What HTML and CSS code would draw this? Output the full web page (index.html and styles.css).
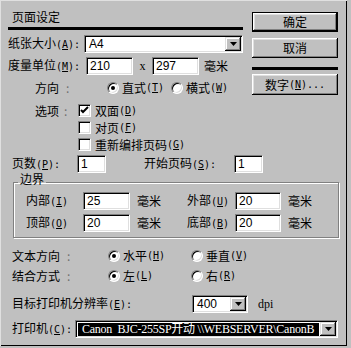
FILE: index.html
```html
<!DOCTYPE html>
<html>
  <head>
    <meta charset="utf-8">
    <title>页面设定</title>
    <link rel="stylesheet" href="styles.css">
  </head>
  <body>
    <div class="dialog">
      <div class="top">
        <div class="main">
          <div class="title">页面设定</div>

          <!-- paper size -->
          <div class="row paper">
            <span class="label w76">纸张大小<span class="acc">(<u>A</u>):</span></span>
            <div class="combo w159">
              <span class="value">A4</span>
              <span class="arrow"><svg width="7" height="4"><path d="M0 0h7l-3.5 4z"/></svg></span>
            </div>
          </div>

          <!-- units -->
          <div class="row measure">
            <span class="label w78">度量单位<span class="acc">(<u>M</u>):</span></span>
            <div class="field w47">210</div>
            <span class="times">x</span>
            <div class="field w47">297</div>
            <span class="unit">毫米</span>
          </div>

          <!-- orientation -->
          <div class="row orient">
            <span class="small-label">方向</span><span class="colon">:</span>
            <span class="choice w64"><span class="radio on"></span>直式<span class="acc">(<u>T</u>)</span></span>
            <span class="choice"><span class="radio"></span>横式<span class="acc">(<u>W</u>)</span></span>
          </div>

          <!-- options -->
          <div class="options">
            <div class="opt-label"><span class="small-label">选项</span><span class="colon">:</span></div>
            <div class="checks">
              <div class="check">
                <span class="box"><svg width="9" height="9"><path d="M1 4l2 2 5-5" fill="none" stroke="#000" stroke-width="2"/></svg></span>双面<span class="acc">(<u>D</u>)</span>
              </div>
              <div class="check"><span class="box"></span>对页<span class="acc">(<u>F</u>)</span></div>
              <div class="check"><span class="box"></span>重新编排页码<span class="acc">(<u>G</u>)</span></div>
            </div>
          </div>
        </div>

        <div class="side">
          <div class="btn default">确定</div>
          <div class="btn cancel">取消</div>
          <div class="sep"></div>
          <div class="btn digits">数字<span class="acc">(<u>N</u>)...</span></div>
        </div>
      </div>

      <!-- page numbers -->
      <div class="row pages">
        <span class="label w65">页数<span class="acc">(<u>P</u>):</span></span>
        <div class="field w29">1</div>
        <span class="label start">开始页码<span class="acc">(<u>S</u>):</span></span>
        <div class="field w29">1</div>
      </div>

      <!-- margins -->
      <fieldset class="margins">
        <legend>边界</legend>
        <div class="row">
          <span class="label w57">内部<span class="acc">(<u>I</u>)</span></span>
          <div class="field w47">25</div>
          <span class="unit wide">毫米</span>
          <span class="label w48">外部<span class="acc">(<u>U</u>)</span></span>
          <div class="field w46">20</div>
          <span class="unit wide">毫米</span>
        </div>
        <div class="row second">
          <span class="label w57">顶部<span class="acc">(<u>O</u>)</span></span>
          <div class="field w47">20</div>
          <span class="unit wide">毫米</span>
          <span class="label w48">底部<span class="acc">(<u>B</u>)</span></span>
          <div class="field w46">20</div>
          <span class="unit wide">毫米</span>
        </div>
      </fieldset>

      <!-- text direction / binding -->
      <div class="row radios textdir">
        <span class="wide-label">文本方向</span><span class="colon">:</span>
        <span class="choice w83"><span class="radio on"></span>水平<span class="acc">(<u>H</u>)</span></span>
        <span class="choice"><span class="radio"></span>垂直<span class="acc">(<u>V</u>)</span></span>
      </div>
      <div class="row radios binding">
        <span class="wide-label">结合方式</span><span class="colon">:</span>
        <span class="choice w83"><span class="radio on"></span>左<span class="acc">(<u>L</u>)</span></span>
        <span class="choice"><span class="radio"></span>右<span class="acc">(<u>R</u>)</span></span>
      </div>

      <!-- printer -->
      <div class="row dpi-row">
        <span class="label w180">目标打印机分辨率<span class="acc">(<u>E</u>):</span></span>
        <div class="combo w56">
          <span class="value">400</span>
          <span class="arrow"><svg width="7" height="4"><path d="M0 0h7l-3.5 4z"/></svg></span>
        </div>
        <span class="dpi">dpi</span>
      </div>
      <div class="row printer">
        <span class="label w63">打印机<span class="acc">(<u>C</u>):</span></span>
        <div class="combo w263">
          <span class="selected">Canon&nbsp; BJC-255SP开动 \\WEBSERVER\CanonB</span>
          <span class="arrow"><svg width="7" height="4"><path d="M0 0h7l-3.5 4z"/></svg></span>
        </div>
      </div>
    </div>
  </body>
</html>
```

FILE: styles.css
```css
* {
  box-sizing: border-box;
}
body {
  margin: 0;
  background-color: #c0c0c0;
  color: #000000;
  font-family: "Noto Sans CJK SC", sans-serif;
  font-size: 12px;
  line-height: 12px;
}
.dialog {
  width: 347px;
  height: 346px;
  box-shadow: inset 1px 1px #e0e0e0, inset -1px -1px #000000;
}
.acc {
  font-family: "DejaVu Sans Mono", monospace;
  font-size: 10px;
}
.acc u {
  text-underline-offset: 1px;
}

/* top part */
.top {
  display: flex;
  padding-left: 8px;
}
.main {
  width: 236px;
}
.side {
  width: 86px;
  margin-left: 8px;
  padding-top: 12px;
}
.title {
  width: 235px;
  height: 30px;
  padding: 11px 0 0 4px;
  border-bottom: 3px solid #000000;
}
.row {
  display: flex;
  align-items: center;
  height: 18px;
  white-space: nowrap;
}
.label {
  flex: none;
}
.w76 { width: 76px; }
.w78 { width: 78px; }
.w65 { width: 65px; }
.w57 { width: 57px; }
.w48 { width: 48px; }
.w63 { width: 63px; }
.w180 { width: 180px; }
.w159 { width: 159px; }
.w47 { width: 47px; }
.w46 { width: 46px; }
.w29 { width: 29px; }
.w56 { width: 56px; }
.w263 { width: 263px; }
.w64 { width: 64px; }
.w83 { width: 83px; }

.paper {
  margin-top: 5px;
}
.measure {
  margin-top: 4px;
}
.times {
  width: 19px;
  text-align: center;
  font-family: "Liberation Serif", serif;
  font-size: 12px;
}
.unit {
  margin-left: 5px;
}
.unit.wide {
  margin-left: 7px;
  width: 50px;
}
.orient {
  margin-top: 7px;
  height: 12px;
  padding-left: 27px;
}
.small-label {
  width: 30px;
}
.colon {
  width: 16px;
  padding-left: 1px;
  color: #707070;
}
.choice {
  display: flex;
  align-items: center;
  flex: none;
}
.radio {
  position: relative;
  width: 12px;
  height: 12px;
  margin-right: 3px;
  border-radius: 50%;
  border: 1px solid;
  border-color: #808080 #ffffff #ffffff #808080;
  background-color: #ffffff;
  box-shadow: inset 1px 1px #000000, inset -1px -1px #dfdfdf;
}
.radio.on::after {
  content: "";
  position: absolute;
  left: 3px;
  top: 3px;
  width: 4px;
  height: 4px;
  border-radius: 50%;
  background-color: #000000;
}
.options {
  display: flex;
  margin-top: 8px;
  padding-left: 27px;
}
.opt-label {
  display: flex;
  align-items: center;
  width: 43px;
  height: 17px;
}
.check {
  display: flex;
  align-items: center;
  height: 17px;
  white-space: nowrap;
}
.box {
  display: flex;
  align-items: center;
  justify-content: center;
  width: 13px;
  height: 13px;
  margin-right: 4px;
  border: 1px solid;
  border-color: #808080 #ffffff #ffffff #808080;
  background-color: #ffffff;
  box-shadow: inset 1px 1px #000000, inset -1px -1px #dfdfdf;
}

/* buttons */
.btn {
  display: flex;
  align-items: center;
  justify-content: center;
  height: 20px;
  background-color: #c0c0c0;
  box-shadow: inset -1px -1px #000000, inset 1px 1px #ffffff, inset -2px -2px #808080, inset 2px 2px #dfdfdf;
}
.btn.default {
  border: 1px solid #000000;
}
.btn.cancel {
  margin-top: 6px;
}
.sep {
  height: 3px;
  margin-top: 9px;
  background-color: #000000;
}
.btn.digits {
  margin-top: 4px;
  height: 21px;
}

/* inputs */
.field, .combo {
  flex: none;
  display: flex;
  align-items: center;
  height: 18px;
  padding: 1px;
  border: 1px solid;
  border-color: #808080 #ffffff #ffffff #808080;
  background-color: #ffffff;
  box-shadow: inset 1px 1px #000000, inset -1px -1px #dfdfdf;
  font-family: "Liberation Sans", sans-serif;
  font-size: 12px;
}
.field {
  padding-left: 3px;
}
.combo .value {
  flex: 1;
  padding-left: 3px;
}
.arrow {
  display: flex;
  align-items: center;
  justify-content: center;
  width: 16px;
  height: 14px;
  background-color: #c0c0c0;
  box-shadow: inset -1px -1px #000000, inset 1px 1px #dfdfdf, inset -2px -2px #808080, inset 2px 2px #ffffff;
}

/* page numbers */
.pages {
  margin-top: 2px;
  padding-left: 12px;
}
.start {
  width: 90px;
  margin-left: 38px;
}

/* margins group */
.margins {
  width: 325px;
  margin: 0 0 0 13px;
  padding: 1px 0 5px 12px;
  border: 1px solid #808080;
  box-shadow: 1px 1px 0 #ffffff, inset 1px 1px 0 #ffffff;
}
.margins legend {
  margin-left: -8px;
  padding: 0 2px 6px;
  line-height: 12px;
}
.margins .second {
  margin-top: 4px;
}
.margins .unit.wide {
  width: 50px;
}

/* radio rows */
.radios {
  height: 12px;
  padding-left: 12px;
}
.wide-label {
  width: 54px;
}
.colon + .choice {
  margin-left: 26px;
}
.textdir {
  margin-top: 12px;
}
.binding {
  margin-top: 8px;
}

/* printer */
.dpi-row {
  margin-top: 13px;
  padding-left: 12px;
}
.dpi {
  margin-left: 10px;
  font-family: "Liberation Serif", serif;
  font-size: 12px;
}
.printer {
  margin-top: 7px;
  padding-left: 12px;
}
.selected {
  flex: 1;
  height: 13px;
  margin: 0 1px 0 1px;
  padding-left: 4px;
  overflow: hidden;
  background-color: #000000;
  color: #ffffff;
  font-family: "Liberation Serif", "Noto Sans CJK SC", serif;
  font-size: 12px;
  line-height: 13px;
  letter-spacing: -0.25px;
  white-space: nowrap;
}
```
